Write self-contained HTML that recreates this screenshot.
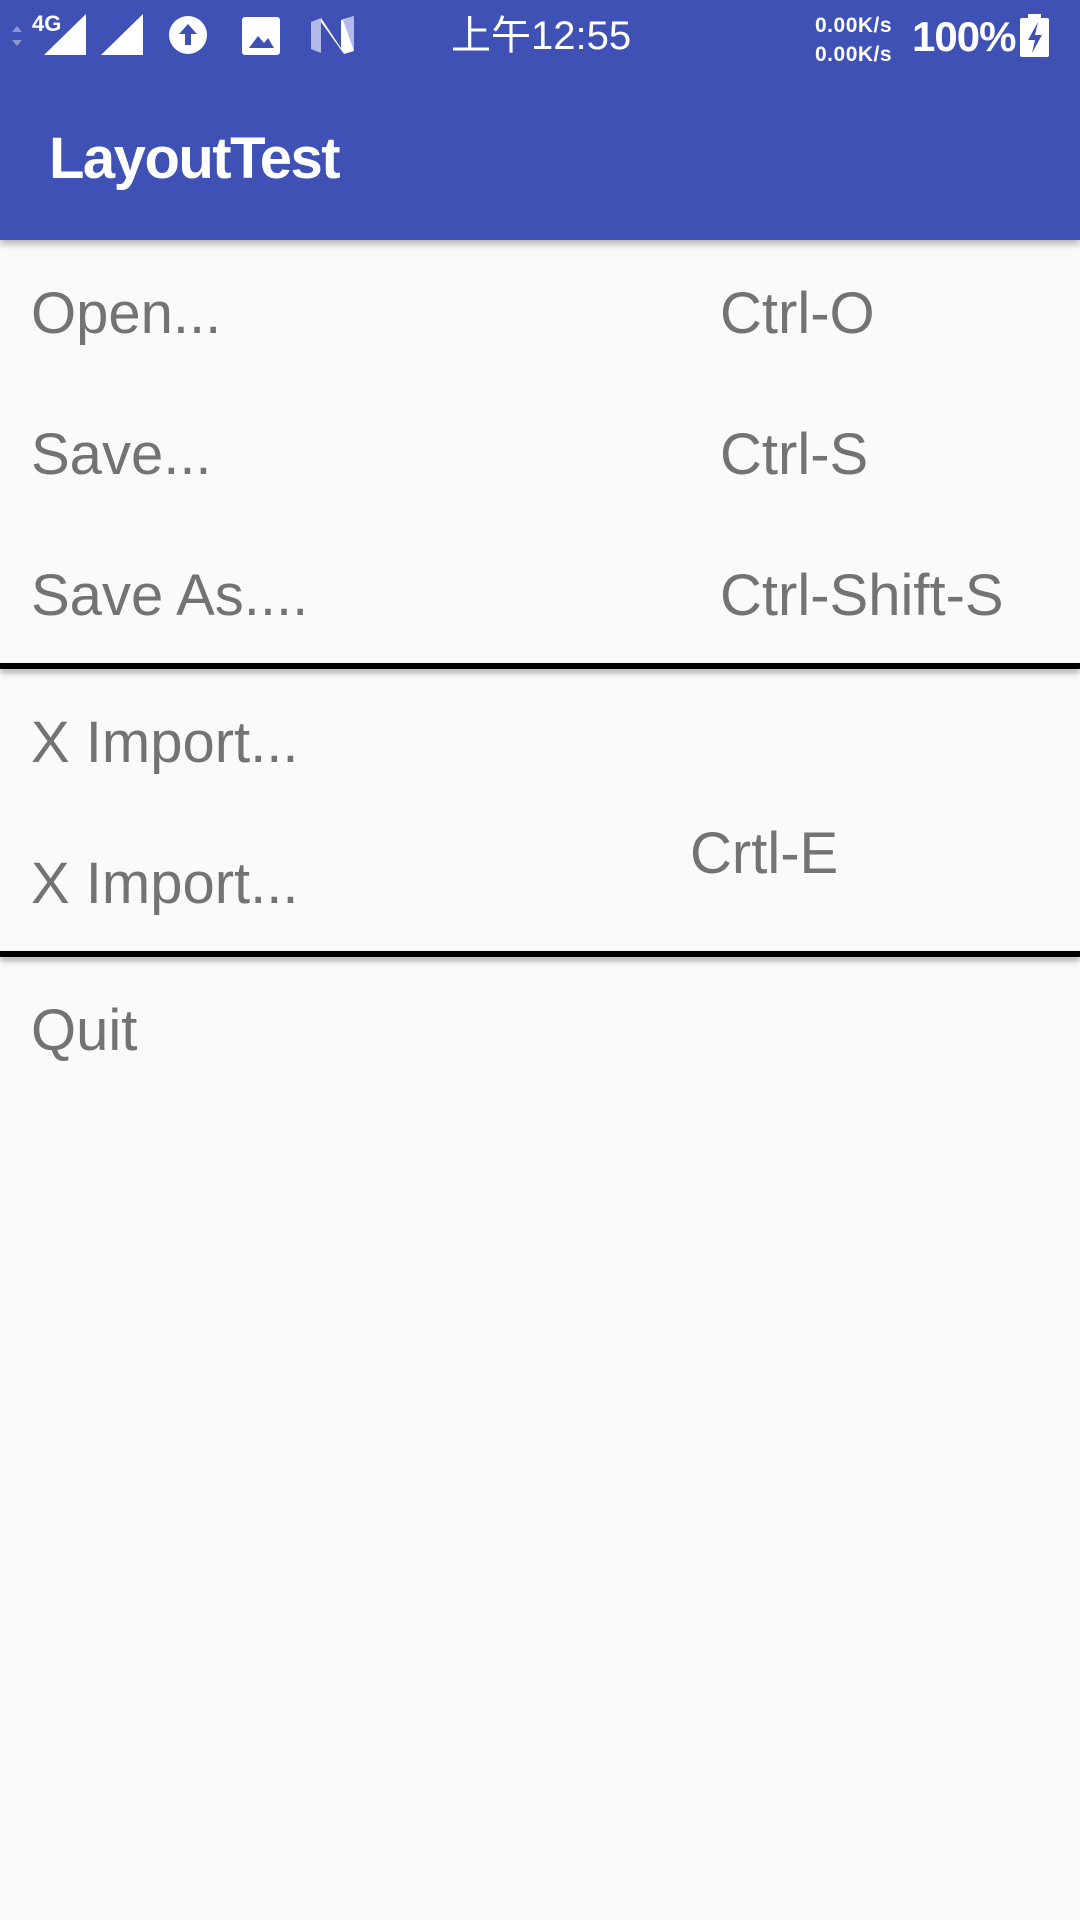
<!DOCTYPE html>
<html><head><meta charset="utf-8"><style>
*{margin:0;padding:0;box-sizing:border-box}
body{width:1080px;height:1920px;background:#fafafa;font-family:"Liberation Sans","Noto Sans CJK SC",sans-serif;position:relative;overflow:hidden}
.bar{position:absolute;left:0;top:0;width:1080px;height:240px;background:#3f51b5;box-shadow:0 3px 8px rgba(0,0,0,.35)}
.t{position:absolute;color:#737373;font-size:58px;line-height:1;white-space:nowrap}
.w{position:absolute;color:#fff;white-space:nowrap;line-height:1}
.line{position:absolute;left:0;width:1080px;height:6px;background:#000;box-shadow:0 4px 6px rgba(0,0,0,.3)}
</style></head><body>
<div class="bar">
<svg width="1080" height="72" style="position:absolute;left:0;top:0">
<path d="M12 32 l5 -6 l5 6z M12 40 l5 6 l5 -6z" fill="#8d97d6"/>
<path d="M86 14 L86 55 L44 55Z" fill="#fff"/>
<path d="M143 14 L143 55 L101 55Z" fill="#fff"/>
<circle cx="188" cy="35" r="19" fill="#fff"/>
<path d="M188 24 l-9 10 h6 v11 h6 v-11 h6z" fill="#3f51b5"/>
<rect x="242" y="17" width="38" height="38" rx="3" fill="#fff"/>
<path d="M249 48 l9 -12 l6 7 l4 -5 l6 10z" fill="#3f51b5"/>
<path d="M311 22 l10 -4 v35 l-10 -4z" fill="#b3baea"/>
<path d="M321 18 l20 30 v-28 l13 -4 v35 l-10 3 l-23 -32z" fill="#fff"/>
<path d="M343 20 l11 -4 v35" fill="#b3baea"/>
<rect x="1028" y="14" width="13" height="5" fill="#fff"/>
<rect x="1020" y="18" width="29" height="39" rx="2" fill="#fff"/>
<path d="M1038 22 l-10 18 h7 l-3 13 l10 -18 h-7z" fill="#3f51b5"/>
</svg>
<div class="w" style="left:32px;top:13px;font-size:22px;font-weight:bold">4G</div>
<div class="w" style="left:451px;top:16px;font-size:40px;">上午12:55</div>
<div class="w" style="left:815px;top:11px;font-size:21px;font-weight:bold;line-height:29px;letter-spacing:0.5px">0.00K/s<br>0.00K/s</div>
<div class="w" style="left:912px;top:16px;font-size:42px;font-weight:bold;letter-spacing:-1px">100%</div>
<div class="w" style="left:49px;top:130px;font-size:58px;font-weight:bold;letter-spacing:-1.5px">LayoutTest</div>
</div>
<div class="t" style="left:31px;top:285px">Open...</div>
<div class="t" style="left:720px;top:285px">Ctrl-O</div>
<div class="t" style="left:31px;top:426px">Save...</div>
<div class="t" style="left:720px;top:426px">Ctrl-S</div>
<div class="t" style="left:31px;top:567px">Save As....</div>
<div class="t" style="left:720px;top:567px">Ctrl-Shift-S</div>
<div class="line" style="top:663px"></div>
<div class="t" style="left:31px;top:714px">X Import...</div>
<div class="t" style="left:31px;top:855px">X Import...</div>
<div class="t" style="left:690px;top:825px">Crtl-E</div>
<div class="line" style="top:951px"></div>
<div class="t" style="left:31px;top:1002px">Quit</div>
</body></html>
